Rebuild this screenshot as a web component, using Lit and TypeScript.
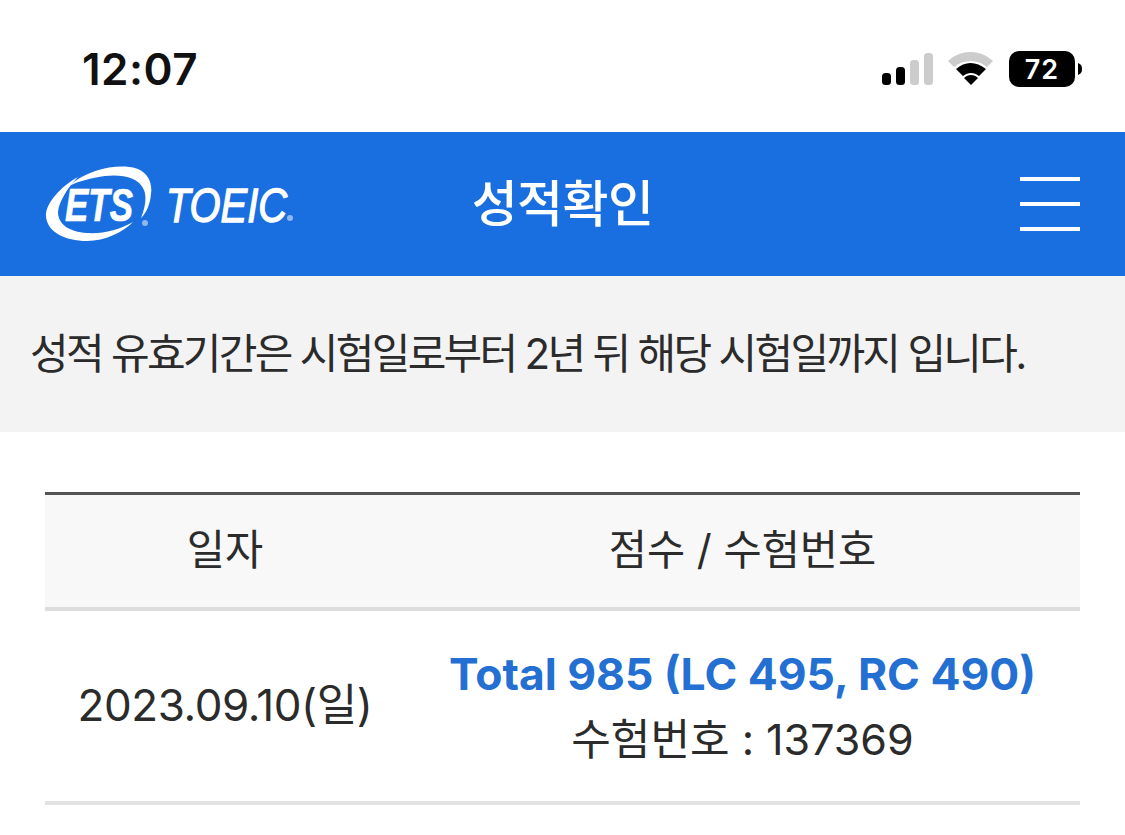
import { LitElement, html, css } from "lit";
import { customElement } from "lit/decorators.js";

@customElement("app-root")
export class AppRoot extends LitElement {
  static styles = css`
    :host { display: block; width: 1125px; height: 835px; overflow: hidden; background: #fff; color: #222;
      font-family: Inter, "Noto Sans CJK KR", sans-serif; }
    .status { height: 132px; display: flex; align-items: flex-start; justify-content: space-between; padding: 43px 43px 0 82px; box-sizing: border-box; }
    .time { font-size: 44px; line-height: 52px; font-weight: 600; color: #111; letter-spacing: 0.5px; }
    .icons { display: block; margin-top: 7px; }
    .nav { height: 144px; background: #1a6fe0; display: grid; grid-template-columns: 1fr auto 1fr; align-items: center; padding: 0 45px; color: #fff; }
    .logo { display: block; }
    .title { font-size: 50px; line-height: 60px; font-weight: 500; letter-spacing: -0.6px; }
    .burger { justify-self: end; width: 60px; display: flex; flex-direction: column; gap: 21px; }
    .burger i { display: block; height: 4px; background: #fff; }
    .notice { height: 156px; box-sizing: border-box; background: #f3f3f3; display: flex; align-items: center; padding: 0 0 8px 30px; font-size: 42px; letter-spacing: -2.7px; color: #2b2b2b; }
    .table { margin: 60px 45px 0; }
    .row { display: grid; grid-template-columns: 360px 1fr; text-align: center; align-items: center; }
    .head { height: 112px; background: #f8f8f8; border-top: 3px solid #555; border-bottom: 4px solid #ddd; font-size: 41.5px; line-height: 56px; color: #2b2b2b; }
    .head > div { margin-top: -2px; }
    .body { height: 190px; border-bottom: 4px solid #e2e2e2; color: #2b2b2b; }
    .score { display: flex; flex-direction: column; gap: 9px; }
    .total { color: #2370d2; font-weight: 700; font-size: 44.4px; line-height: 56px; }
    .num { line-height: 56px; font-size: 43px; }
    .date { font-size: 44px; letter-spacing: -0.4px; line-height: 56px; margin-top: -2px; }
  `;

  render() {
    return html`
      <div class="status">
        <span class="time">12:07</span>
        <svg class="icons" width="200" height="40" viewBox="0 0 200 40">
          <rect x="0" y="23" width="9" height="12" rx="3.5" fill="#000"/>
          <rect x="14" y="17" width="9" height="18" rx="3.5" fill="#000"/>
          <rect x="28" y="10" width="9" height="25" rx="3.5" fill="#ccc"/>
          <rect x="42" y="3" width="9" height="32" rx="3.5" fill="#ccc"/>
          <path d="M66 11 C 79 -1 98 -1 111 11 L 105 17 C 96 9 81 9 72 17 Z" fill="#ccc"/>
          <path d="M74 19 C 83 11 94 11 104 19 L 97 26 C 92 22 86 22 81 26 Z" fill="#000"/>
          <path d="M82 28 C 86 24 92 24 96 28 L 89 35 Z" fill="#000"/>
          <rect x="127" y="1" width="66" height="36" rx="10" fill="#000"/>
          <path d="M196 13 C 199 14 200 16 200 19 C 200 22 199 24 196 25 Z" fill="#000"/>
          <text x="160" y="29" text-anchor="middle" fill="#fff" font-family="Inter" font-weight="600" font-size="27" letter-spacing="1">72</text>
        </svg>
      </div>
      <div class="nav">
        <svg class="logo" width="290" height="76" viewBox="0 0 290 76">
          <path d="M24 20 C 42 4 68 -1 84 1 C 100 2 108 14 106 28 C 105 38 102 46 96 52 C 100 42 102 32 99 24 C 94 11 76 8 60 10 C 46 12 34 15 24 20 Z" fill="#fff"/>
          <path d="M33 11 C 16 20 0 38 1 50 C 2 66 20 75 42 75 C 60 75 78 66 88 56 C 74 64 58 68 42 67 C 24 66 13 58 13 46 C 14 36 22 22 33 11 Z" fill="#fff"/>
          <text x="20" y="55" fill="#fff" stroke="#fff" stroke-width="0.7" font-family="'Liberation Sans'" font-weight="700" font-style="italic" font-size="46" textLength="68" lengthAdjust="spacingAndGlyphs">ETS</text>
          <text x="121" y="56" fill="#fff" stroke="#fff" stroke-width="1.3" font-family="'Liberation Sans'" font-style="italic" font-size="48" textLength="121" lengthAdjust="spacingAndGlyphs">TOEIC</text>
          <circle cx="100" cy="57" r="3" fill="#8fb8ee"/>
          <circle cx="245" cy="52" r="3" fill="#8fb8ee"/>
        </svg>
        <div class="title">성적확인</div>
        <div class="burger"><i></i><i></i><i></i></div>
      </div>
      <div class="notice">성적 유효기간은 시험일로부터 2년 뒤 해당 시험일까지 입니다.</div>
      <div class="table">
        <div class="row head"><div>일자</div><div>점수 / 수험번호</div></div>
        <div class="row body">
          <div class="date">2023.09.10(일)</div>
          <div class="score">
            <div class="total">Total 985 (LC 495, RC 490)</div>
            <div class="num">수험번호 : 137369</div>
          </div>
        </div>
      </div>
    `;
  }
}
